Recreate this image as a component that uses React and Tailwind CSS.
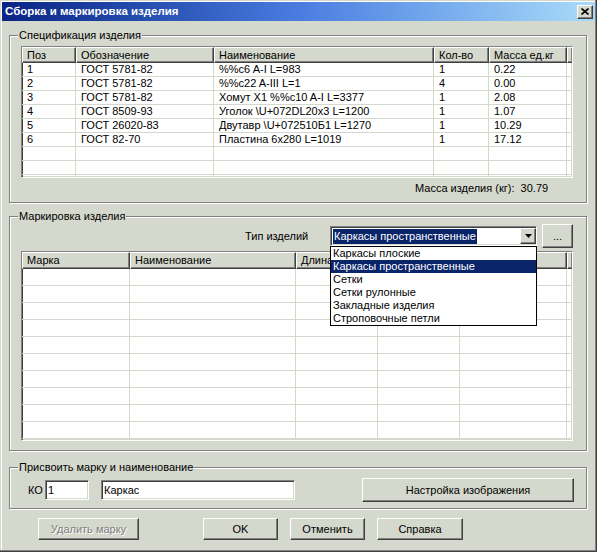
import React from "react";

const raised =
  "border border-t-white border-l-white border-r-[#404040] border-b-[#404040] shadow-[inset_-1px_-1px_0_#808080] bg-[#d5d8cd]";
const sunken =
  "border border-t-[#808080] border-l-[#808080] border-r-white border-b-white shadow-[inset_1px_1px_0_#404040,inset_-1px_-1px_0_#d5d8cd]";
const etched = "border border-[#808080] shadow-[inset_1px_1px_0_#fff,1px_1px_0_#fff]";

const specCols = [54, 138, 220, 55, 78, 3];
const specHead = ["Поз", "Обозначение", "Наименование", "Кол-во", "Масса ед.кг", ""];
const specRows = [
  ["1", "ГОСТ 5781-82", "%%c6 A-I L=983", "1", "0.22"],
  ["2", "ГОСТ 5781-82", "%%c22 A-III L=1", "4", "0.00"],
  ["3", "ГОСТ 5781-82", "Хомут X1 %%c10 A-I L=3377", "1", "2.08"],
  ["4", "ГОСТ 8509-93", "Уголок \\U+072DL20x3 L=1200", "1", "1.07"],
  ["5", "ГОСТ 26020-83", "Двутавр \\U+072510Б1 L=1270", "1", "10.29"],
  ["6", "ГОСТ 82-70", "Пластина 6х280 L=1019", "1", "17.12"],
];

// columns 4 and 5 of the marking table sit under the open list, their captions are not seen
const markCols = [108, 166, 82, 82, 107, 3];
const markHead = ["Марка", "Наименование", "Длина", "", "", ""];

const types = [
  "Каркасы плоские",
  "Каркасы пространственные",
  "Сетки",
  "Сетки рулонные",
  "Закладные изделия",
  "Строповочные петли",
];

function Table({ cols, head, rows, total, headH, rowH, className }) {
  const body = Array.from({ length: total }, (_, i) => rows[i] || []);
  return (
    <div className={`${sunken} bg-white overflow-hidden ${className}`}>
      <div className="flex" style={{ height: headH }}>
        {head.map((h, i) => (
          <div
            key={i}
            className={`${raised} shrink-0 flex items-center pl-[4px] whitespace-nowrap overflow-hidden`}
            style={{ width: cols[i] }}
          >
            {h}
          </div>
        ))}
      </div>
      {body.map((r, ri) => (
        <div key={ri} className="flex" style={{ height: rowH }}>
          {cols.map((w, ci) => (
            <div
              key={ci}
              className="shrink-0 border-r border-b border-[#d5d8cd] flex items-center pl-[5px] whitespace-nowrap overflow-hidden"
              style={{ width: w }}
            >
              {r[ci] || ""}
            </div>
          ))}
        </div>
      ))}
    </div>
  );
}

function Button({ children, className = "", disabled }) {
  return (
    <button
      className={`${raised} h-[22px] flex items-center justify-center ${
        disabled ? "text-[#808080] [text-shadow:1px_1px_0_#fff]" : ""
      } ${className}`}
    >
      {children}
    </button>
  );
}

export default function App() {
  return (
    <div className="w-[597px] h-[552px] bg-[#d5d8cd] overflow-hidden px-[2px] pt-[2px] text-[11px] leading-[13px] text-black font-['Liberation_Sans',sans-serif] shadow-[inset_-1px_-1px_0_#404040,inset_-2px_-2px_0_#808080,inset_1px_1px_0_#d5d8cd,inset_2px_2px_0_#fff]">
      {/* Title bar */}
      <div className="h-[19px] flex items-center pl-[3px] pr-[2px] bg-linear-to-r from-[#0a2384] via-[#4a7ce0] to-[#aadcf8]">
        <span className="text-white font-bold text-[11.5px]">Сборка и маркировка изделия</span>
        <div className={`${raised} ml-auto w-[16px] h-[14px] flex items-center justify-center`}>
          <svg width="8" height="7" viewBox="0 0 8 7">
            <path d="M0.5 0.5 L7.5 6.5 M7.5 0.5 L0.5 6.5" stroke="#000" strokeWidth="1.6" />
          </svg>
        </div>
      </div>

      {/* Спецификация */}
      <fieldset className={`${etched} mt-[8px] ml-[7px] w-[578px] pb-[7px]`}>
        <legend className="ml-[8px] px-[1px] bg-[#d5d8cd]">Спецификация изделия</legend>
        <Table
          cols={specCols}
          head={specHead}
          rows={specRows}
          total={10}
          headH={16}
          rowH={14}
          className="mt-[4px] ml-[11px] w-[552px] h-[132px]"
        />
        <div className="mt-[3px] h-[14px] flex items-center pl-[405px]">
          Масса изделия (кг):&nbsp;&nbsp;30.79
        </div>
      </fieldset>

      {/* Маркировка */}
      <fieldset className={`${etched} mt-[7px] ml-[7px] w-[578px] pb-[9px]`}>
        <legend className="ml-[8px] px-[1px] bg-[#d5d8cd]">Маркировка изделия</legend>
        <div className="mt-[1px] h-[24px] flex items-center">
          <span className="ml-[235px] w-[85px]">Тип изделий</span>
          <div className="relative w-[207px]">
            <div className={`${sunken} bg-white h-[20px] flex items-center pl-[2px]`}>
              <span className="bg-[#0a246a] text-white px-[1px] h-[15px] flex items-center">
                Каркасы пространственные
              </span>
              <div className={`${raised} ml-auto w-[16px] h-[16px] flex items-center justify-center`}>
                <svg width="7" height="4" viewBox="0 0 7 4">
                  <path d="M0 0 H7 L3.5 4 Z" fill="#000" />
                </svg>
              </div>
            </div>
            <div className="absolute left-0 top-full w-[207px] bg-white border border-black z-10">
              {types.map((t, i) => (
                <div
                  key={t}
                  className={`h-[13px] flex items-center pl-[2px] ${
                    i === 1 ? "bg-[#0a246a] text-white" : ""
                  }`}
                >
                  {t}
                </div>
              ))}
            </div>
          </div>
          <Button className="ml-[5px] w-[31px] h-[24px]">...</Button>
        </div>
        <Table
          cols={markCols}
          head={markHead}
          rows={[]}
          total={11}
          headH={17}
          rowH={17}
          className="mt-[3px] ml-[11px] w-[552px] h-[190px]"
        />
      </fieldset>

      {/* Присвоить */}
      <fieldset className={`${etched} mt-[10px] ml-[7px] w-[578px] pb-[6px]`}>
        <legend className="ml-[8px] px-[1px] bg-[#d5d8cd]">Присвоить марку и наименование</legend>
        <div className="mt-[4px] h-[24px] flex items-center pl-[18px]">
          <span className="w-[17px]">КО</span>
          <div className={`${sunken} bg-white w-[44px] h-[20px] flex items-center pl-[2px]`}>1</div>
          <div className={`${sunken} bg-white ml-[12px] w-[194px] h-[20px] flex items-center pl-[2px]`}>
            Каркас
          </div>
          <Button className="ml-[67px] w-[212px] h-[24px]">Настройка изображения</Button>
        </div>
      </fieldset>

      {/* Buttons */}
      <div className="mt-[9px] flex">
        <Button disabled className="ml-[36px] w-[101px]">
          Удалить марку
        </Button>
        <Button className="ml-[64px] w-[75px]">OK</Button>
        <Button className="ml-[12px] w-[75px]">Отменить</Button>
        <Button className="ml-[12px] w-[86px]">Справка</Button>
      </div>
    </div>
  );
}
